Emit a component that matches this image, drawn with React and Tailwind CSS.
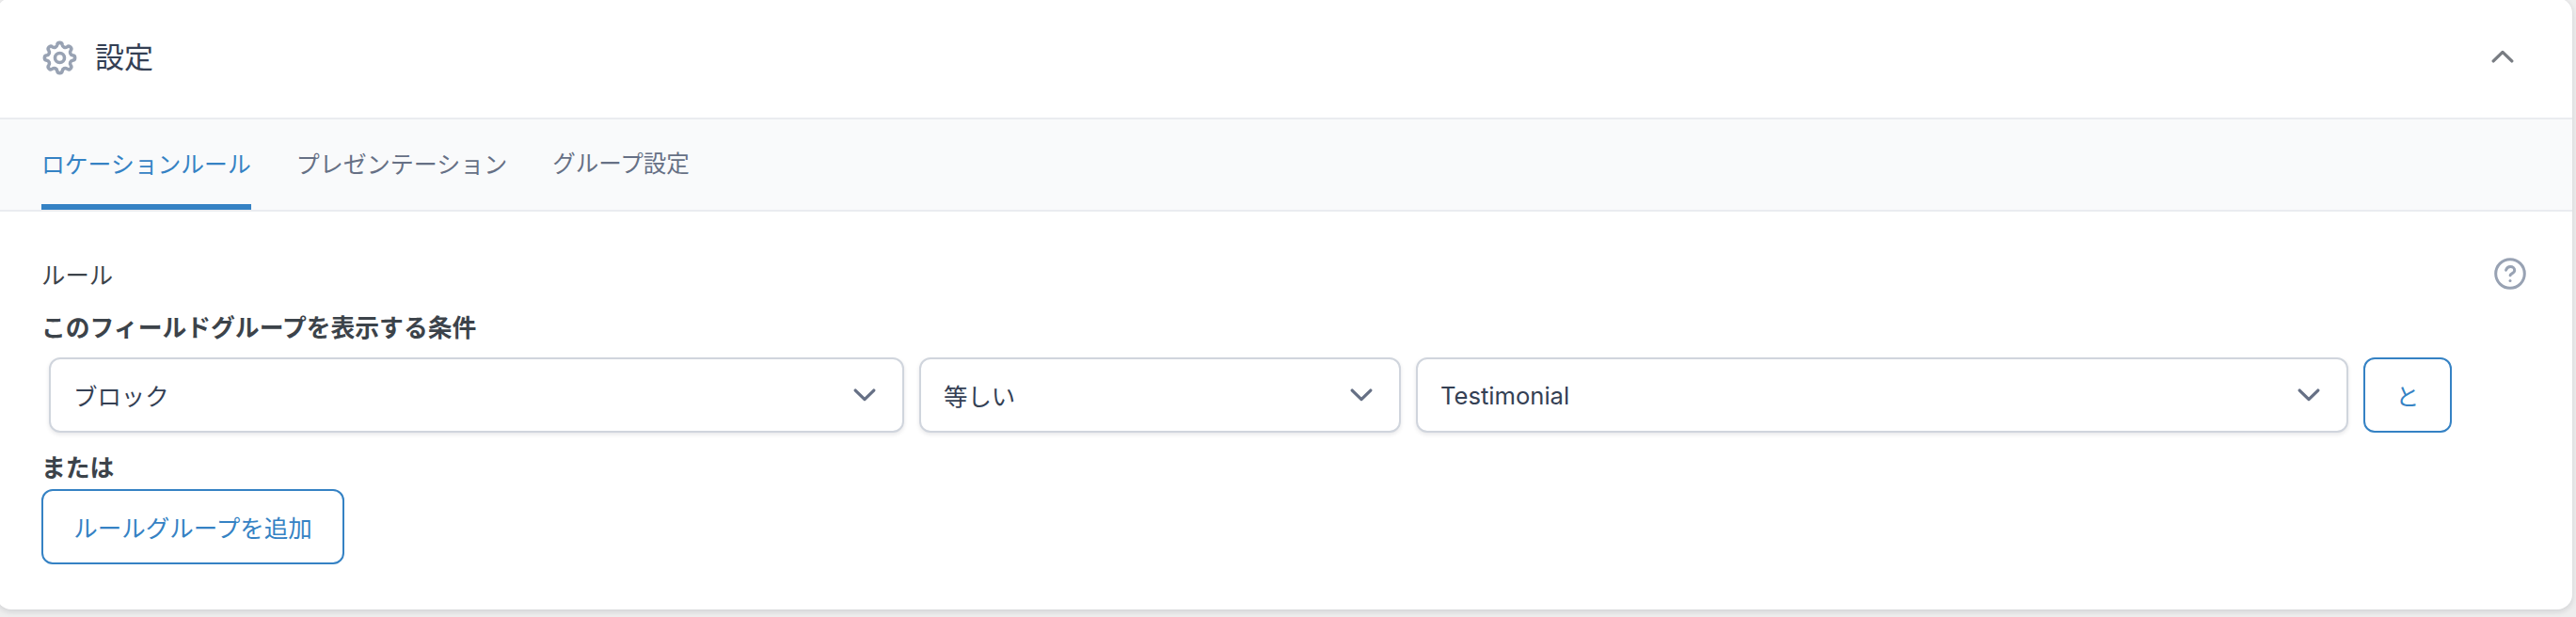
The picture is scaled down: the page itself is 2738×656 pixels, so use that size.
function Gear() {
  return (
    <svg viewBox="-18.5 -18.5 37 37" className="-mt-px size-[37px] text-[#98a2b3]" fill="none" stroke="currentColor" strokeWidth="3.6" strokeLinejoin="round">
      <circle r="5" />
      <path d="M13.73-2.73A2.75 2.75 0 0 1 13.73 2.73A3.2 3.2 0 0 0 11.64 7.78A2.75 2.75 0 0 1 7.78 11.64A3.2 3.2 0 0 0 2.73 13.73A2.75 2.75 0 0 1-2.73 13.73A3.2 3.2 0 0 0-7.78 11.64A2.75 2.75 0 0 1-11.64 7.78A3.2 3.2 0 0 0-13.73 2.73A2.75 2.75 0 0 1-13.73-2.73A3.2 3.2 0 0 0-11.64-7.78A2.75 2.75 0 0 1-7.78-11.64A3.2 3.2 0 0 0-2.73-13.73A2.75 2.75 0 0 1 2.73-13.73A3.2 3.2 0 0 0 7.78-11.64A2.75 2.75 0 0 1 11.64-7.78A3.2 3.2 0 0 0 13.73-2.73Z" />
    </svg>
  );
}

function Chevron({ className }) {
  return (
    <svg viewBox="0 0 24 14" className={`h-3.5 w-6 ${className}`} fill="none" stroke="currentColor" strokeWidth="3.3" strokeLinecap="round" strokeLinejoin="round">
      <path d="M2.2 2.1 12 11.6 21.8 2.1" />
    </svg>
  );
}

function Help() {
  return (
    <svg viewBox="0 0 34 34" className="size-[34px] text-[#98a2b3]" fill="none" stroke="currentColor" strokeWidth="3" strokeLinecap="round" strokeLinejoin="round">
      <circle cx="17" cy="17" r="15.3" />
      <path d="M12.6 13.2C13.3 10.8 15.1 9.6 17.3 9.6c2.5 0 4.4 1.6 4.4 3.9 0 3.2-4.6 3.3-4.6 5.2" />
      <path d="M17 24.5v.1" />
    </svg>
  );
}

function Select({ children, className }) {
  return (
    <div className={`flex h-20 items-center justify-between rounded-xl border-2 border-[#d0d5dd] bg-white pr-7 pl-6 text-[25.4px] text-[#344054] shadow-[0_2px_4px_rgba(16,24,40,0.1)] ${className}`}>
      <span>{children}</span>
      <Chevron className="text-[#667085]" />
    </div>
  );
}

const tabs = ["ロケーションルール", "プレゼンテーション", "グループ設定"];

export default function App() {
  return (
    <div className="h-[656px] w-[2738px] overflow-hidden bg-[#eeeeee] font-['Noto_Sans_CJK_JP',sans-serif] text-[24.8px] leading-9">
      <section className="-mt-0.5 -ml-1 h-[650px] w-[2738px] overflow-hidden rounded-2xl bg-white pl-1 shadow-[0_2px_6px_rgba(16,24,40,0.14)]">
        <header className="flex h-[127px] items-center pr-[62px] pl-[45px]">
          <Gear />
          <h2 className="mb-[5px] ml-[19px] text-[31px] text-[#344054]">設定</h2>
          <Chevron className="mb-[3px] ml-auto rotate-180 text-[#787c82]" />
        </header>
        <nav className="-ml-1 flex h-[100px] gap-12 border-y-2 border-[#eaecf0] bg-[#f9fafb] pl-12">
          {tabs.map((tab, i) => (
            <div
              key={tab}
              className={`flex items-center border-b-6 pt-px ${i === 0 ? "border-[#3582c4] text-[#3582c4]" : "border-transparent text-[#667085]"} ${i === 1 ? "text-[25px]" : ""} ${i === 2 ? "text-[24.5px]" : ""}`}
            >
              {tab}
            </div>
          ))}
        </nav>
        <div className="pt-12 pl-11 text-[#3c434a]">
          <div className="flex h-9 items-center justify-between pr-[49px]">
            <span className="text-[25.4px]">ルール</span>
            <Help />
          </div>
          <h3 className="mt-5 text-[25.8px] font-bold">このフィールドグループを表示する条件</h3>
          <div className="mt-[15px] ml-2 flex gap-4">
            <Select className="w-[909px]">ブロック</Select>
            <Select className="w-[512px]">等しい</Select>
            <Select className="w-[991px]">
              <span className="block pt-0.5 font-[Inter] text-[25.6px]">Testimonial</span>
            </Select>
            <button className="h-20 w-[94px] rounded-xl border-2 border-[#3582c4] text-[#3582c4]">と</button>
          </div>
          <p className="mt-[18px] mb-[6px] text-[25.8px] font-bold">または</p>
          <button className="h-20 w-[322px] rounded-xl border-2 border-[#3582c4] text-[25.5px] text-[#3582c4]">ルールグループを追加</button>
        </div>
      </section>
    </div>
  );
}
